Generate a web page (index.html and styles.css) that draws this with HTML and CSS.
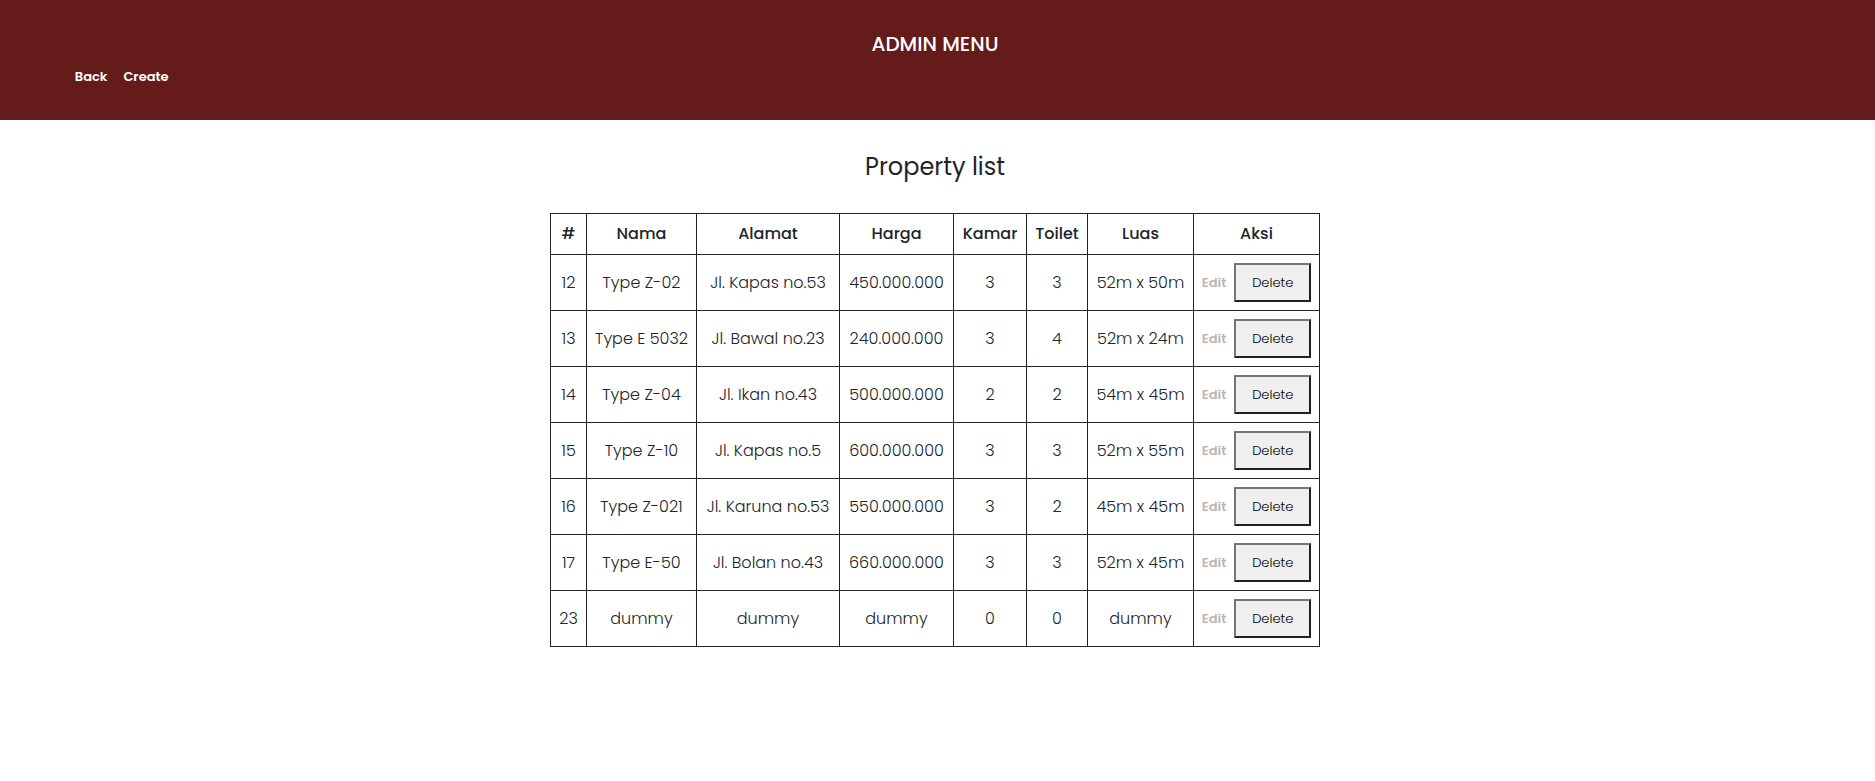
FILE: index.html
```html
<!DOCTYPE html>
<html lang="id">
<head>
<meta charset="utf-8">
<meta name="viewport" content="width=device-width, initial-scale=1">
<title>Property list</title>
<link rel="stylesheet" href="styles.css">
</head>
<body>
<header class="header">
  <h1 class="header-title">ADMIN MENU</h1>
  <nav class="nav">
    <a class="nav-link" href="#back">Back</a>
    <a class="nav-link" href="#create">Create</a>
  </nav>
</header>
<main class="main">
  <h2 class="list-title">Property list</h2>
  <table class="table">
    <colgroup>
      <col class="col-id"><col class="col-name"><col class="col-address"><col class="col-price">
      <col class="col-rooms"><col class="col-toilets"><col class="col-area"><col class="col-actions">
    </colgroup>
    <thead>
      <tr><th>#</th><th>Nama</th><th>Alamat</th><th>Harga</th><th>Kamar</th><th>Toilet</th><th>Luas</th><th>Aksi</th></tr>
    </thead>
    <tbody>
      <tr><td>12</td><td>Type Z-02</td><td>Jl. Kapas no.53</td><td>450.000.000</td><td>3</td><td>3</td><td>52m x 50m</td><td><div class="actions"><a class="edit" href="#edit-12">Edit</a><button class="delete" type="button">Delete</button></div></td></tr>
      <tr><td>13</td><td>Type E 5032</td><td>Jl. Bawal no.23</td><td>240.000.000</td><td>3</td><td>4</td><td>52m x 24m</td><td><div class="actions"><a class="edit" href="#edit-13">Edit</a><button class="delete" type="button">Delete</button></div></td></tr>
      <tr><td>14</td><td>Type Z-04</td><td>Jl. Ikan no.43</td><td>500.000.000</td><td>2</td><td>2</td><td>54m x 45m</td><td><div class="actions"><a class="edit" href="#edit-14">Edit</a><button class="delete" type="button">Delete</button></div></td></tr>
      <tr><td>15</td><td>Type Z-10</td><td>Jl. Kapas no.5</td><td>600.000.000</td><td>3</td><td>3</td><td>52m x 55m</td><td><div class="actions"><a class="edit" href="#edit-15">Edit</a><button class="delete" type="button">Delete</button></div></td></tr>
      <tr><td>16</td><td>Type Z-021</td><td>Jl. Karuna no.53</td><td>550.000.000</td><td>3</td><td>2</td><td>45m x 45m</td><td><div class="actions"><a class="edit" href="#edit-16">Edit</a><button class="delete" type="button">Delete</button></div></td></tr>
      <tr><td>17</td><td>Type E-50</td><td>Jl. Bolan no.43</td><td>660.000.000</td><td>3</td><td>3</td><td>52m x 45m</td><td><div class="actions"><a class="edit" href="#edit-17">Edit</a><button class="delete" type="button">Delete</button></div></td></tr>
      <tr><td>23</td><td>dummy</td><td>dummy</td><td>dummy</td><td>0</td><td>0</td><td>dummy</td><td><div class="actions"><a class="edit" href="#edit-23">Edit</a><button class="delete" type="button">Delete</button></div></td></tr>
    </tbody>
  </table>
</main>
</body>
</html>
```

FILE: styles.css
```css
* {
  box-sizing: border-box;
}

body {
  margin: 0;
  background: #fff;
  color: #212529;
  font-family: Poppins, Inter, sans-serif;
  font-size: 16px;
  font-weight: 300;
  line-height: 24px;
}

.header {
  padding: 32px 5px 30px 0;
  background: #641b19;
  color: #fff;
}

.header-title {
  margin: 0 0 8px;
  font-size: 20px;
  font-weight: 500;
  line-height: 24px;
  text-align: center;
}

.nav {
  display: flex;
  gap: 16px;
  padding: 0 4%;
  line-height: 26px;
}

.nav-link {
  color: #fff;
  font-size: 13px;
  font-weight: 600;
  text-decoration: none;
}

.main {
  padding: 32px 5px 32px 0;
}

.list-title {
  margin: 0 0 32px;
  font-size: 24px;
  font-weight: 400;
  line-height: 29px;
  text-align: center;
}

.table {
  margin: 0 auto;
  border-collapse: collapse;
  text-align: center;
  white-space: nowrap;
}

.table th,
.table td {
  padding: 8px 4px;
  border: 1px solid #212529;
}

.table th {
  font-weight: 500;
}

.col-id { width: 36px; }
.col-name { width: 110px; }
.col-address { width: 143px; }
.col-price { width: 114px; }
.col-rooms { width: 73px; }
.col-toilets { width: 61px; }
.col-area { width: 106px; }
.col-actions { width: 126px; }

.actions {
  display: flex;
  align-items: center;
  justify-content: center;
  gap: 8px;
}

.edit {
  color: #c1b4b4;
  font-size: 13px;
  font-weight: 600;
  text-decoration: none;
}

.delete {
  padding: 8px 16px;
  border: 2px solid;
  border-color: #767676 #212121 #212121 #767676;
  background: #efefef;
  color: #000;
  font-family: inherit;
  font-size: 13px;
  font-weight: 300;
  line-height: 19px;
}
```
